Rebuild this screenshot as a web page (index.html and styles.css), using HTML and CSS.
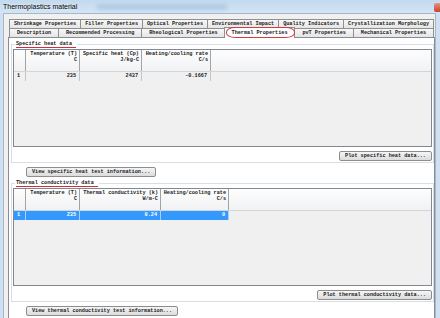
FILE: index.html
```html
<!DOCTYPE html>
<html>
<head>
  <title>Thermoplastics material</title>
  <link rel="stylesheet" href="styles.css">
</head>
<body>
  <div class="window">
    <div class="titlebar">
      <span class="title">Thermoplastics material</span>
      <span class="glass"></span>
      <span class="close"></span>
    </div>

    <div class="client">
      <!-- Two rows of property tabs -->
      <div class="tabs">
        <div class="tab-row">
          <div class="tab">Shrinkage Properties</div>
          <div class="tab">Filler Properties</div>
          <div class="tab">Optical Properties</div>
          <div class="tab">Environmental Impact</div>
          <div class="tab">Quality Indicators</div>
          <div class="tab">Crystallization Morphology</div>
        </div>
        <div class="tab-row">
          <div class="tab">Description</div>
          <div class="tab">Recommended Processing</div>
          <div class="tab">Rheological Properties</div>
          <div class="tab active">Thermal Properties</div>
          <div class="tab">pvT Properties</div>
          <div class="tab">Mechanical Properties</div>
        </div>
      </div>

      <div class="page">
        <!-- Specific heat -->
        <fieldset class="group">
          <legend><span class="mark">Specific heat data</span></legend>
          <div class="grid">
            <div class="grid-head heat-cols">
              <div class="cell"></div>
              <div class="cell">Temperature (T)<br>C</div>
              <div class="cell">Specific heat (Cp)<br>J/kg-C</div>
              <div class="cell">Heating/cooling rate<br>C/s</div>
              <div class="filler"></div>
            </div>
            <div class="grid-row heat-cols">
              <div class="cell num">1</div>
              <div class="cell">235</div>
              <div class="cell">2437</div>
              <div class="cell">-0.1667</div>
              <div class="filler"></div>
            </div>
          </div>
          <div class="group-actions">
            <button>Plot specific heat data...</button>
          </div>
        </fieldset>
        <button class="info-btn">View specific heat test information...</button>

        <!-- Thermal conductivity -->
        <fieldset class="group">
          <legend><span class="mark">Thermal conductivity data</span></legend>
          <div class="grid">
            <div class="grid-head cond-cols">
              <div class="cell"></div>
              <div class="cell">Temperature (T)<br>C</div>
              <div class="cell">Thermal conductivity (k)<br>W/m-C</div>
              <div class="cell">Heating/cooling rate<br>C/s</div>
              <div class="filler"></div>
            </div>
            <div class="grid-row cond-cols selected">
              <div class="cell num">1</div>
              <div class="cell">235</div>
              <div class="cell">0.24</div>
              <div class="cell">0</div>
              <div class="filler"></div>
            </div>
          </div>
          <div class="group-actions">
            <button>Plot thermal conductivity data...</button>
          </div>
        </fieldset>
        <button class="info-btn">View thermal conductivity test information...</button>
      </div>
    </div>
  </div>
</body>
</html>
```

FILE: styles.css
```css
* {
  box-sizing: border-box;
}
body {
  margin: 0;
  width: 440px;
  height: 318px;
  overflow: hidden;
  background: #cfe0f1;
  font-family: "Liberation Mono", monospace;
  font-size: 5.2px;
  font-weight: bold;
  color: #1a1a1a;
}
.window {
  height: 318px;
  display: flex;
  flex-direction: column;
}

/* title bar */
.titlebar {
  height: 13px;
  flex: none;
  display: flex;
  align-items: flex-start;
  background: linear-gradient(#c3d9ee, #d4e5f5);
}
.title {
  padding-left: 3px;
  font-family: "Liberation Sans", Arial, sans-serif;
  font-size: 7px;
  font-weight: normal;
  line-height: 13px;
  color: #000;
  text-shadow: 0 0 3px #fff;
}
.glass {
  width: 130px;
  height: 4px;
  margin: 5px 0 0 20px;
  background: #a6c2de;
  filter: blur(2px);
}
.close {
  margin-left: auto;
  margin-top: 3px;
  width: 6px;
  height: 9px;
  border-radius: 2px 0 0 2px;
  background: linear-gradient(#e6957f, #c7402f);
}

/* client area */
.client {
  flex: 1;
  overflow: hidden;
  margin: 0 4px 0 3px;
  padding: 5px 0 0 4px;
  border: 1px solid #a5b7ca;
  border-bottom: none;
  background: #f0f0f0;
}

/* tabs */
.tabs {
  margin: 0 1px;
}
.tab-row {
  display: flex;
  height: 9px;
}
.tab {
  flex: auto;
  padding: 0 2px;
  margin-right: -1px;
  border: 1px solid #8e8f8f;
  border-bottom: none;
  background: linear-gradient(#f7f7f7, #e5e5e5);
  line-height: 8px;
  text-align: center;
  white-space: nowrap;
}
.tab:last-child {
  margin-right: 0;
}
.tab.active {
  position: relative;
  z-index: 1;
  margin: -1px -1px -1px -1px;
  background: #fff;
  line-height: 10px;
}
.tab.active::after {
  content: "";
  position: absolute;
  left: 1px;
  right: -1px;
  top: -1px;
  bottom: 0;
  border: 1px solid #d13d44;
  border-radius: 9px / 5px;
}

/* tab page */
.page {
  height: 300px;
  padding-left: 1px;
  border: 1px solid #898c95;
  background: #fff;
}

/* group boxes */
.group {
  margin: 3px 0 0 1px;
  padding: 0 0 1px 0;
  border: 1px solid #d5dfe5;
  min-width: 0;
}
.group legend {
  margin-left: 3px;
  padding: 0 1px;
  line-height: 6px;
}
.mark {
  padding-right: 4px;
  border-bottom: 1px solid #cc3038;
}
.grid {
  height: 98px;
  margin: 2px 1px 0 1px;
  border: 1px solid #828790;
  background: #f0f0f0;
}
.heat-cols {
  display: grid;
  grid-template-columns: 12px 54px 62px 69px 1fr;
}
.cond-cols {
  display: grid;
  grid-template-columns: 12px 54px 81px 68px 1fr;
}
.grid-head {
  height: 22px;
  border-bottom: 1px solid #d5d5d5;
  background: linear-gradient(#fdfdfd, #f1f2f4);
}
.grid-head .cell {
  padding: 2px 2px 0 0;
  border-right: 1px solid #a3a3a3;
  line-height: 5.5px;
  text-align: right;
}
.grid-row {
  height: 9px;
  line-height: 9px;
}
.grid-row .cell {
  padding-right: 3px;
  border-right: 1px solid #c6c6c6;
  text-align: right;
}
.grid-row .num {
  padding-left: 3px;
  text-align: left;
}
.selected .cell {
  background: #3399ff;
  border-right-color: #a8d0f8;
  color: #fff;
}
.group-actions {
  display: flex;
  justify-content: flex-end;
  margin: 4px 1px 0 0;
}

/* buttons */
button {
  height: 10px;
  padding: 0 5px;
  border: 1px solid #8d8d8d;
  border-radius: 2px;
  background: linear-gradient(#f5f5f5, #dcdcdc);
  font: inherit;
  line-height: 8px;
  color: #1a1a1a;
}
.info-btn {
  display: block;
  margin: 4px 0 0 16px;
}
```
